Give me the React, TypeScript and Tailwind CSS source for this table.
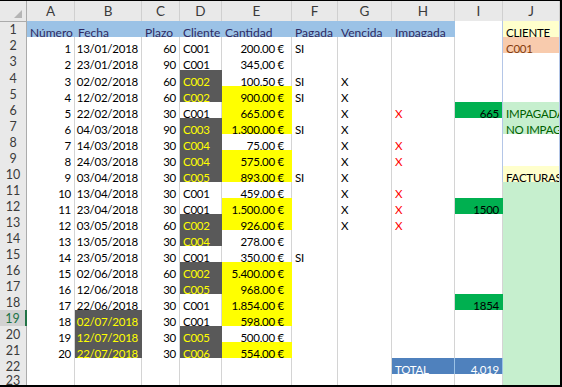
import React from 'react';

type Tone =
  | 'plain'
  | 'blue'
  | 'dark'
  | 'yellow'
  | 'green'
  | 'totalLabel'
  | 'totalNum'
  | 'note'
  | 'input'
  | 'good'
  | 'goodFill'
  | 'jLine';

const toneClass: Record<Tone, string> = {
  plain: 'bg-white border-[#d4d4d4] text-black',
  blue: 'bg-[#9bc2e6] border-[#9bc2e6] text-[#2e2a62] text-[12px] tracking-normal',
  dark: 'bg-[#595959] border-[#595959] text-[#ffff00]',
  yellow: 'bg-[#ffff00] border-[#ffff00] text-black',
  green: 'bg-[#00b050] border-[#00b050] text-black',
  totalLabel: 'bg-[#4f81bd] border-b-[#4f81bd] border-r-[#9bc2e6] text-white',
  totalNum: 'bg-[#4f81bd] border-[#9bc2e6] text-white',
  note: 'bg-[#ffffcc] border-[#b4c6e7] text-black shadow-[-1px_0_0_#b4c6e7]',
  input: 'bg-[#f8cbad] border-[#b4c6e7] text-[#843c0c] shadow-[-1px_0_0_#b4c6e7]',
  good: 'bg-[#c6efce] border-[#b4c6e7] text-[#006100] shadow-[-1px_0_0_#b4c6e7]',
  goodFill: 'bg-[#c6efce] border-[#c6efce]',
  jLine: 'bg-white border-[#b4c6e7] shadow-[-1px_0_0_#b4c6e7]',
};

type CellDef = {
  text?: string;
  tone?: Tone;
  align?: 'left' | 'right';
  money?: boolean;
  red?: boolean;
};

const GRID =
  'grid grid-cols-[27px_48px_67px_38px_42px_70px_46px_54px_63px_48px_57px]';

// Número, Fecha, Plazo, Cliente, Cantidad
const invoices: [number, string, number, string, string][] = [
  [1, '13/01/2018', 60, 'C001', '200,00 €'],
  [2, '23/01/2018', 90, 'C001', '345,00 €'],
  [3, '02/02/2018', 60, 'C002', '100,50 €'],
  [4, '12/02/2018', 60, 'C002', '900,00 €'],
  [5, '22/02/2018', 30, 'C001', '665,00 €'],
  [6, '04/03/2018', 90, 'C003', '1.300,00 €'],
  [7, '14/03/2018', 30, 'C004', '75,00 €'],
  [8, '24/03/2018', 30, 'C004', '575,00 €'],
  [9, '03/04/2018', 30, 'C005', '893,00 €'],
  [10, '13/04/2018', 30, 'C001', '459,00 €'],
  [11, '23/04/2018', 30, 'C001', '1.500,00 €'],
  [12, '03/05/2018', 60, 'C002', '926,00 €'],
  [13, '13/05/2018', 30, 'C004', '278,00 €'],
  [14, '23/05/2018', 30, 'C001', '350,00 €'],
  [15, '02/06/2018', 60, 'C002', '5.400,00 €'],
  [16, '12/06/2018', 30, 'C005', '968,00 €'],
  [17, '22/06/2018', 30, 'C001', '1.854,00 €'],
  [18, '02/07/2018', 30, 'C001', '598,00 €'],
  [19, '12/07/2018', 30, 'C005', '500,00 €'],
  [20, '22/07/2018', 30, 'C006', '554,00 €'],
];

// sheet row numbers with conditional formats
const darkClient = new Set([4, 5, 7, 8, 9, 10, 13, 14, 16, 17, 20, 21]);
const yellowAmount = new Set([5, 6, 7, 9, 10, 12, 13, 16, 17, 18, 19, 21]);
const darkDate = new Set([19, 20, 21]);
const paid = new Set([2, 4, 5, 7, 10, 15]);
const overdue = new Set([4, 5, 6, 7, 8, 9, 10, 11, 12, 13]);
const unpaid = new Set([6, 8, 9, 11, 12, 13]);
const unpaidAmount: Record<number, string> = { 6: '665', 12: '1500', 18: '1854' };

function sideCell(r: number): CellDef {
  if (r === 1) return { text: 'CLIENTE', tone: 'note' };
  if (r === 2) return { text: 'C001', tone: 'input' };
  if (r === 6) return { text: 'IMPAGADA', tone: 'good' };
  if (r === 7) return { text: 'NO IMPAGADA', tone: 'good' };
  if (r === 10) return { text: 'FACTURAS IMPAGADAS', tone: 'note' };
  if (r >= 11) return { tone: 'goodFill' };
  return { tone: 'jLine' };
}

function buildRow(r: number): CellDef[] {
  if (r === 1) {
    return [
      { text: 'Número', tone: 'blue' },
      { text: 'Fecha', tone: 'blue' },
      { text: 'Plazo', tone: 'blue' },
      { text: 'Cliente', tone: 'blue' },
      { text: 'Cantidad', tone: 'blue' },
      { text: 'Pagada', tone: 'blue' },
      { text: 'Vencida', tone: 'blue' },
      { text: 'Impagada', tone: 'blue' },
      {},
      sideCell(1),
    ];
  }
  const inv = invoices[r - 2];
  if (!inv) {
    const isTotal = r === 22;
    return [
      {},
      {},
      {},
      {},
      {},
      {},
      {},
      isTotal ? { text: 'TOTAL', tone: 'totalLabel' } : {},
      isTotal ? { text: '4.019', tone: 'totalNum', align: 'right' } : {},
      sideCell(r),
    ];
  }
  const [num, date, term, client, amount] = inv;
  return [
    { text: String(num), align: 'right' },
    { text: date, align: 'right', tone: darkDate.has(r) ? 'dark' : 'plain' },
    { text: String(term), align: 'right' },
    { text: client, tone: darkClient.has(r) ? 'dark' : 'plain' },
    { text: amount, align: 'right', money: true, tone: yellowAmount.has(r) ? 'yellow' : 'plain' },
    { text: paid.has(r) ? 'SI' : undefined },
    { text: overdue.has(r) ? 'X' : undefined },
    { text: unpaid.has(r) ? 'X' : undefined, red: true },
    unpaidAmount[r]
      ? { text: unpaidAmount[r], tone: 'green', align: 'right' }
      : {},
    sideCell(r),
  ];
}

function Cell({ def }: { def: CellDef }) {
  const tone = toneClass[def.tone ?? 'plain'];
  const justify = def.align === 'right' ? 'justify-end' : 'justify-start';
  const pad = def.money ? 'pl-[3px] pr-[7px]' : 'px-[3px]';
  return (
    <div
      className={`flex items-end overflow-hidden whitespace-nowrap border-r border-b leading-[14px] ${tone} ${justify} ${pad}`}
    >
      {def.text && (
        <span className={def.red ? 'text-[#ff0000]' : ''}>{def.text}</span>
      )}
    </div>
  );
}

function RowHeader({ n, selected }: { n: number; selected?: boolean }) {
  return selected ? (
    <div className="flex items-center justify-center border-b border-b-[#bdbdbd] border-r-2 border-r-[#217346] bg-[#d2d2d2] text-[12.5px] tracking-normal text-[#217346]">
      {n}
    </div>
  ) : (
    <div className="flex items-center justify-center border-b border-b-[#d0d0d0] border-r border-r-[#ababab] bg-[#e9e9e9] text-[12.5px] tracking-normal text-[#3b3b3b]">
      {n}
    </div>
  );
}

function SheetRow({ n, height }: { n: number; height: string }) {
  const cells = buildRow(n);
  return (
    <div className={`${GRID} ${height}`}>
      <RowHeader n={n} selected={n === 19} />
      {cells.map((c, i) => (
        <Cell key={i} def={c} />
      ))}
    </div>
  );
}

const letters = ['A', 'B', 'C', 'D', 'E', 'F', 'G', 'H', 'I', 'J'];

export default function App() {
  const rowNumbers = Array.from({ length: 22 }, (_, i) => i + 1);
  return (
    <div
      className="h-[387px] w-[562px] overflow-hidden border-t border-r-2 border-b-2 border-black bg-white text-[11.5px] tracking-[-0.25px] text-black"
      style={{ fontFamily: 'Lato, "Open Sans", "Liberation Sans", sans-serif' }}
    >
      {/* column letters */}
      <div className={`${GRID} h-5`}>
        <div className="relative border-r border-b border-[#ababab] bg-[#e9e9e9]">
          <svg className="absolute right-[4px] bottom-[3px]" width="8" height="8" viewBox="0 0 8 8">
            <polygon points="8,0 8,8 0,8" fill="#b5b5b5" />
          </svg>
        </div>
        {letters.map((l) => (
          <div
            key={l}
            className="flex items-center justify-center border-r border-r-[#d0d0d0] border-b border-b-[#ababab] bg-[#e9e9e9] text-[13.5px] tracking-normal text-[#3b3b3b]"
          >
            {l}
          </div>
        ))}
      </div>
      {rowNumbers.map((n) => (
        <SheetRow key={n} n={n} height={n === 3 ? 'h-[17px]' : 'h-4'} />
      ))}
      <div className={`${GRID} h-[11px] overflow-hidden`}>
        <div className="flex items-start justify-center overflow-hidden border-r border-r-[#ababab] bg-[#e9e9e9] text-[12.5px] leading-[14px] tracking-normal text-[#3b3b3b]">
          23
        </div>
        {Array.from({ length: 9 }, (_, i) => (
          <div key={i} className="border-r border-[#d4d4d4] bg-white" />
        ))}
        <div className="bg-[#c6efce]" />
      </div>
    </div>
  );
}
